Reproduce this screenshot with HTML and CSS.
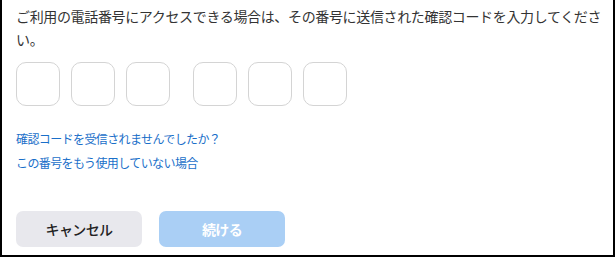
FILE: index.html
```html
<!DOCTYPE html>
<html lang="ja">
<head>
  <meta charset="UTF-8" />
  <meta name="viewport" content="width=device-width, initial-scale=1.0"/>
  <title>確認コード</title>
  <link rel="stylesheet" href="styles.css">
</head>
<body>
  <div class="panel">
    <p class="intro">ご利用の電話番号にアクセスできる場合は、その番号に送信された確認コードを入力してください。</p>

    <div class="code">
      <div class="group">
        <input class="digit" type="text" maxlength="1">
        <input class="digit" type="text" maxlength="1">
        <input class="digit" type="text" maxlength="1">
      </div>
      <div class="group">
        <input class="digit" type="text" maxlength="1">
        <input class="digit" type="text" maxlength="1">
        <input class="digit" type="text" maxlength="1">
      </div>
    </div>

    <div class="links">
      <a href="#">確認コードを受信されませんでしたか？</a>
      <a href="#">この番号をもう使用していない場合</a>
    </div>

    <div class="actions">
      <button class="btn cancel">キャンセル</button>
      <button class="btn next" disabled>続ける</button>
    </div>
  </div>
</body>
</html>
```

FILE: styles.css
```css
* {
  box-sizing: border-box;
}
body {
  margin: 0;
  background: #fff;
  font-family: "Noto Sans CJK JP", "Noto Sans", sans-serif;
}
.panel {
  width: 615px;
  height: 257px;
  border: 2px solid #000;
  border-top: none;
  padding: 5px 8px 0 14px;
}
.intro {
  margin: 0;
  font-size: 14px;
  line-height: 23px;
  letter-spacing: -0.35px;
  color: #333;
}
.code {
  display: flex;
  gap: 23px;
  margin-top: 11px;
}
.group {
  display: flex;
  gap: 11px;
}
.digit {
  width: 44px;
  height: 44px;
  border: 1px solid #d4d4d4;
  border-radius: 10px;
  background: #fff;
  outline: none;
}
.links {
  display: flex;
  flex-direction: column;
  align-items: flex-start;
  margin-top: 21px;
}
.links a {
  font-size: 12px;
  line-height: 24px;
  letter-spacing: -0.6px;
  color: #1a6fc9;
  text-decoration: none;
}
.actions {
  display: flex;
  gap: 17px;
  margin-top: 36px;
}
.btn {
  width: 126px;
  height: 36px;
  border: none;
  border-radius: 7px;
  font-family: inherit;
  font-size: 14px;
  letter-spacing: -0.6px;
}
.cancel {
  background: #e8e8ed;
  color: #222;
  font-weight: 500;
  cursor: pointer;
}
.next {
  background: #aacff5;
  color: #fff;
  font-weight: 700;
}
```
